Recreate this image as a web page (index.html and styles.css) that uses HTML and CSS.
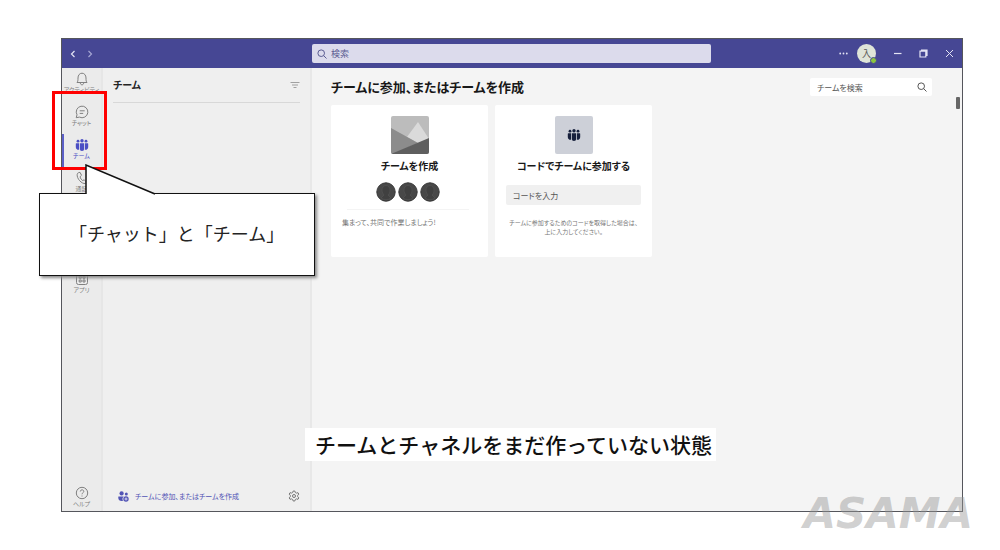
FILE: index.html
```html
<!DOCTYPE html>
<html lang="ja">
<head>
<meta charset="utf-8">
<meta name="viewport" content="width=device-width, initial-scale=1">
<title>チーム</title>
<link rel="stylesheet" href="styles.css">
</head>
<body>
<svg class="defs" aria-hidden="true">
  <symbol id="people" viewBox="0 0 14 14">
    <circle cx="7" cy="2.700" r="1.700"/><circle cx="3" cy="3.200" r="1.400"/><circle cx="11" cy="3.200" r="1.400"/>
    <path d="M4.800 5.200h4.400v5.500a2.200 2.200 0 0 1-4.400 0zM1.400 5.200H4v5.300c0 .5.1.9.300 1.300C2.300 12.200.8 10.900.8 9V5.800c0-.4.2-.6.6-.6zM12.600 5.200H10v5.300c0 .5-.1.900-.3 1.300 2 .4 3.500-.9 3.500-2.800V5.800c0-.4-.2-.6-.6-.6z"/>
  </symbol>
  <symbol id="lens" viewBox="0 0 10 10">
    <circle cx="4.200" cy="4.200" r="3.300" fill="none" stroke="currentColor"/><path d="M6.600 6.600 9.500 9.500" stroke="currentColor"/>
  </symbol>
</svg>
<div class="stage">
  <div class="window">
    <header class="titlebar">
      <nav class="history">
        <button aria-label="戻る"><svg width="6" height="8" viewBox="0 0 6 8" fill="none" stroke="currentColor" stroke-width="1.200"><path d="M4.500 1 1.500 4l3 3"/></svg></button>
        <button class="dim" aria-label="進む"><svg width="6" height="8" viewBox="0 0 6 8" fill="none" stroke="currentColor" stroke-width="1.200"><path d="m1.500 1 3 3-3 3"/></svg></button>
      </nav>
      <label class="search"><svg width="10" height="10"><use href="#lens"/></svg><input type="search" placeholder="検索" aria-label="検索"></label>
      <div class="controls">
        <button class="more" aria-label="その他"><svg width="9" height="3" viewBox="0 0 9 3" fill="currentColor"><circle cx="1.200" cy="1.500" r=".9"/><circle cx="4.500" cy="1.500" r=".9"/><circle cx="7.800" cy="1.500" r=".9"/></svg></button>
        <button class="avatar">入<span class="status"></span></button>
        <button aria-label="最小化"><svg width="9" height="9" viewBox="0 0 9 9" stroke="currentColor" stroke-width="1.200"><path d="M1 4.500h7.500"/></svg></button>
        <button aria-label="元に戻す"><svg width="9" height="9" viewBox="0 0 9 9" fill="none" stroke="currentColor" stroke-width="1.200"><path d="M1 2.200h5.800V8H1zM2 1h6v6"/></svg></button>
        <button aria-label="閉じる"><svg width="9" height="9" viewBox="0 0 9 9" stroke="currentColor"><path d="m1 1 7 7M8 1 1 8"/></svg></button>
      </div>
    </header>
    <div class="workspace">
      <nav class="rail">
        <a href="#activity"><svg width="14" height="14" viewBox="0 0 14 14" fill="none" stroke="currentColor"><path d="M2 10.500c.8-1 1-1.800 1-4.500C3 3.200 4.600 1.200 7 1.200S11 3.200 11 6c0 2.700.2 3.500 1 4.500zM5.300 11c.2 1.200.8 1.800 1.700 1.800s1.500-.6 1.700-1.800"/></svg><span>アクティビティ</span></a>
        <a href="#chat"><svg width="14" height="14" viewBox="0 0 14 14" fill="none" stroke="currentColor"><path d="M1.200 12.700 2 9.800A5.800 5.800 0 1 1 4.400 12.100zM4.700 5.800h5M4.700 8.400h3.500"/></svg><span>チャット</span></a>
        <a class="active" href="#teams"><svg width="14" height="14" fill="currentColor"><use href="#people"/></svg><span>チーム</span></a>
        <a href="#calls"><svg width="14" height="14" viewBox="0 0 14 14" fill="none" stroke="currentColor"><path d="M3.300 1.800 5 1.300l1.500 3-1.400 1.400c.3 1.700 1.200 2.900 2.500 3.800l1.700-.7 2 2.200-.9 1.500C6.800 13.200 1.500 7.500 2.200 3.300c.1-.8.5-1.200 1.100-1.500z"/></svg><span>通話</span></a>
        <a class="apps" href="#apps"><svg width="14" height="14" viewBox="0 0 14 14" fill="none" stroke="currentColor"><rect x="1.500" y="1.500" width="11" height="11" rx="2"/><path d="M4.200 4.200h2v2h-2zM8 4.200h2v2H8zM4.200 8h2v2h-2zM8 8h2v2H8z"/></svg><span>アプリ</span></a>
        <a class="help" href="#help"><svg width="14" height="14" viewBox="0 0 14 14" fill="none" stroke="currentColor"><circle cx="7" cy="7" r="5.700"/><path d="M5.300 5.500c0-2.300 3.500-2.100 3.500-.1C8.800 6.800 7 6.700 7 8.300M7 9.500v1"/></svg><span>ヘルプ</span></a>
      </nav>
      <aside class="list">
        <div class="list-head"><h1>チーム</h1><button aria-label="フィルター"><svg width="10" height="8" viewBox="0 0 10 8" stroke="currentColor"><path d="M.5 1.500h9M2 4h6M3.500 6.500h3"/></svg></button></div>
        <div class="list-foot">
          <a href="#join"><svg width="11" height="11" viewBox="0 0 11 11" fill="currentColor"><circle cx="3.600" cy="2.400" r="2.100"/><circle cx="8.300" cy="3" r="1.500"/><path d="M.5 5.500h5.300A3.400 3.400 0 0 0 5 9.800C2.500 10.500.3 9.200.3 7V5.700z"/><circle cx="8" cy="8" r="2.700"/><path d="M8 6.500v3M6.500 8h3" stroke="#fff" stroke-width=".7"/></svg>チームに参加、またはチームを作成</a>
          <button aria-label="設定"><svg width="12" height="12" viewBox="0 0 12 12" fill="none" stroke="currentColor"><path d="M5.200 1h1.600l.5 1.500 1.100.6 1.600-.4.8 1.400-1.100 1.200v1.400l1.100 1.200-.8 1.400-1.600-.4-1.100.6-.5 1.500H5.200l-.5-1.500-1.100-.6-1.600.4-.8-1.400 1.100-1.200V5.300L1.200 4.100 2 2.700l1.600.4 1.100-.6z"/><circle cx="6" cy="6" r="1.500"/></svg></button>
        </div>
      </aside>
      <main>
        <div class="main-head">
          <h2>チームに参加、またはチームを作成</h2>
          <label class="team-search"><input type="search" placeholder="チームを検索" aria-label="チームを検索"><svg width="10" height="10"><use href="#lens"/></svg></label>
        </div>
        <div class="cards">
          <section class="card create">
            <svg class="thumb" width="38" height="38" viewBox="0 0 38 38"><path fill="#bcbcbc" d="M0 0h38v38H0z"/><path fill="#dadada" d="m27 6 11 17-11 4-11-6z"/><path fill="#8c8c8c" d="M0 12 27 27 2 38H0z"/><path fill="#5f5f5f" d="m0 38 38-16v16z"/></svg>
            <h3>チームを作成</h3>
            <div class="faces"><svg width="64" height="20" viewBox="0 0 64 20"><g fill="#484848" stroke="#363636"><circle cx="10" cy="10" r="9.200"/><circle cx="32" cy="10" r="9.200"/><circle cx="54" cy="10" r="9.200"/></g><g fill="#404040" stroke="#595959" stroke-width=".5"><path d="M6 8a4 4.500 0 0 1 8 0c0 3-1 4-2 5l3 3a9 9 0 0 1-10 0l3-3C7 12 6 10 6 8z"/><path d="M28 8a4 4.500 0 0 1 8 0c0 3-1 4-2 5l3 3a9 9 0 0 1-10 0l3-3c-1-1-2-3-2-5z"/><path d="M50 8a4 4.500 0 0 1 8 0c0 3-1 4-2 5l3 3a9 9 0 0 1-10 0l3-3c-1-1-2-3-2-5z"/></g></svg></div>
            <p>集まって、共同で作業しましょう!</p>
          </section>
          <section class="card join">
            <div class="thumb badge"><svg width="14" height="14" fill="#17203c"><use href="#people"/></svg></div>
            <h3>コードでチームに参加する</h3>
            <input type="text" placeholder="コードを入力" aria-label="コードを入力">
            <p>チームに参加するためのコードを取得した場合は、<br>上に入力してください。</p>
          </section>
        </div>
        <div class="scroll-thumb"></div>
      </main>
    </div>
  </div>
  <div class="highlight"></div>
  <div class="callout"><svg class="pointer" width="72" height="32" viewBox="0 0 72 32"><path fill="#fff" d="M1 32V1l69 29v2z"/><path fill="none" stroke="#111" stroke-width="1.500" d="M1 30V1l69 29"/></svg>「チャット」と「チーム」</div>
  <div class="caption">チームとチャネルをまだ作っていない状態</div>
  <div class="brand">ASAMA</div>
</div>
</body>
</html>
```

FILE: styles.css
```css
* { box-sizing: border-box; }
body { margin: 0; background: #fff; color: #242424; font-family: "Noto Sans CJK JP", sans-serif; }
h1, h2, h3, p { margin: 0; }
button { display: flex; align-items: center; justify-content: center; padding: 0; border: 0; background: none; color: inherit; font: inherit; }
a { color: inherit; text-decoration: none; }
input { min-width: 0; border: 0; padding: 0; background: none; font: inherit; color: inherit; outline: 0; }
input::placeholder { color: inherit; opacity: 1; }
svg { display: block; flex: none; }
.defs { position: absolute; width: 0; height: 0; }
.stage { position: relative; display: flex; min-height: 100vh; padding: 38px 37px 38px 61px; }
.window { flex: 1; min-width: 0; display: flex; flex-direction: column; border: 1px solid #55565c; font-feature-settings: "palt"; }
.titlebar { display: flex; align-items: center; height: 29px; background: #464794; color: #e4e4f4; }
.history { width: 250px; display: flex; gap: 11px; padding-left: 8px; }
.dim { color: #a5a6d2; }
.search { flex: 1; display: flex; align-items: center; gap: 4px; height: 19px; padding: 0 5px; border-radius: 2px; background: #dcdbec; color: #5b5c92; font-size: 9px; }
.search input { flex: 1; }
.controls { width: 251px; display: flex; align-items: center; justify-content: flex-end; gap: 17px; padding-right: 8px; }
.more { margin-right: -8px; }
.avatar { position: relative; width: 19px; height: 19px; border-radius: 50%; background: #dfe5d8; color: #555; font-size: 9px; }
.status { position: absolute; right: -1px; bottom: -1px; width: 7px; height: 7px; border: 1px solid #464794; border-radius: 50%; background: #8cc63f; }
.workspace { flex: 1; display: flex; }
.rail { width: 39px; display: flex; flex-direction: column; background: #ebebeb; color: #808080; }
.rail a { display: flex; flex-direction: column; align-items: center; height: 33px; padding-top: 4px; overflow: hidden; font-size: 6px; line-height: 7px; white-space: nowrap; }
.rail .active { color: #4b4fc4; border-left: 2px solid #5b5fc7; padding-right: 2px; }
.rail .apps { margin-top: 68px; }
.rail .help { margin-top: auto; height: 29px; }
.list { width: 211px; display: flex; flex-direction: column; background: #efefef; border-left: 2px solid #e6e6e6; border-right: 2px solid #e8e8e8; padding: 0 10px; }
.list-head { display: flex; align-items: center; justify-content: space-between; height: 35px; border-bottom: 1px solid #d8d8d8; color: #a0a0a0; }
.list-head h1 { color: #242424; font-size: 10px; line-height: 16px; }
.list-foot { margin-top: auto; display: flex; align-items: center; justify-content: space-between; height: 30px; padding-left: 5px; color: #777; }
.list-foot a { display: flex; align-items: center; gap: 6px; color: #5254b5; font-size: 7px; line-height: 12px; white-space: nowrap; }
main { position: relative; flex: 1; min-width: 0; padding: 9px 30px 20px 19px; background: #f4f4f4; }
.main-head { display: flex; align-items: center; justify-content: space-between; gap: 16px; }
.main-head h2 { font-size: 13px; line-height: 20px; white-space: nowrap; color: #181818; }
.team-search { display: flex; align-items: center; width: 122px; height: 18px; padding: 0 5px 0 7px; background: #fff; border-radius: 2px; color: #555; font-size: 8px; }
.team-search input { flex: 1; }
.cards { display: flex; flex-wrap: wrap; gap: 7px; margin-top: 8px; }
.card { width: 157px; min-height: 152px; display: flex; flex-direction: column; align-items: center; padding: 11px; background: #fff; border-radius: 2px; }
.thumb { width: 38px; height: 38px; border-radius: 2px; }
.badge { display: flex; align-items: center; justify-content: center; background: #cdd0d8; }
.card h3 { margin-top: 3px; font-size: 10px; line-height: 18px; white-space: nowrap; color: #181818; }
.card p { color: #777; font-size: 6px; line-height: 9px; text-align: center; white-space: nowrap; }
.faces { align-self: stretch; display: flex; justify-content: center; margin: 7px 8px 8px 5px; padding-bottom: 7px; border-bottom: 1px solid #f4f4f4; }
.create p { align-self: flex-start; font-size: 7px; }
.join input { align-self: stretch; height: 20px; margin: 10px 0 13px; padding: 0 7px; background: #f0f0f0; border-radius: 2px; color: #555; font-size: 8px; }
.scroll-thumb { position: absolute; top: 29px; right: 2px; width: 4px; height: 12px; border-radius: 1px; background: #666; }
.highlight { position: absolute; left: 52px; top: 91px; width: 55px; height: 79px; border: 3px solid #f00; }
.callout { position: absolute; left: 39px; top: 193px; width: 276px; height: 83px; display: flex; align-items: center; padding: 0 0 4px 29px; border: 1px solid #111; background: #fff; box-shadow: 2px 2px 3px #888; font-size: 18px; line-height: 24px; white-space: nowrap; }
.pointer { position: absolute; left: 45px; top: -30px; }
.caption { position: absolute; left: 305px; top: 428px; padding: 4px 4px 5px 10px; background: #fff; color: #111; font-size: 21px; line-height: 24px; font-weight: 500; white-space: nowrap; }
.brand { position: absolute; right: 27px; bottom: 22px; color: rgba(150, 150, 150, .45); font: italic bold 42px/28px "DejaVu Sans", sans-serif; }
```
